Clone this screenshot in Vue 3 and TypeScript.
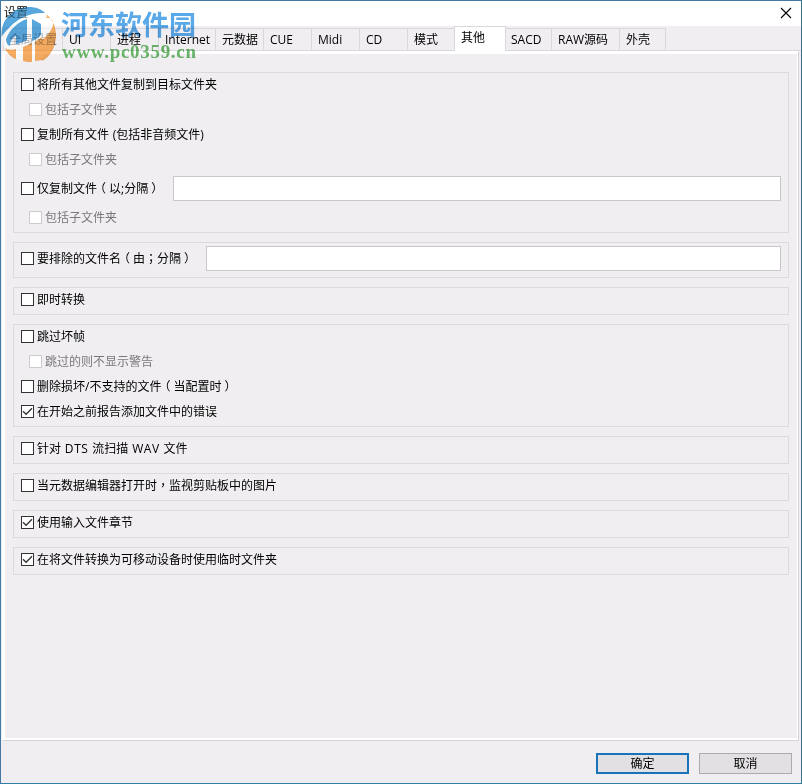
<script setup lang="ts">
interface Option {
  label: string
  sub?: boolean
  checked?: boolean
  field?: number
}

const tabs = [
  { name: '全局设置', width: 60 },
  { name: 'UI', width: 48 },
  { name: '进程', width: 48 },
  { name: 'Internet', width: 57 },
  { name: '元数据', width: 48 },
  { name: 'CUE', width: 48 },
  { name: 'Midi', width: 48 },
  { name: 'CD', width: 48 },
  { name: '模式', width: 47 },
  { name: '其他', width: 52 },
  { name: 'SACD', width: 46 },
  { name: 'RAW源码', width: 68 },
  { name: '外壳', width: 46 },
]

const groups: Option[][] = [
  [
    { label: '将所有其他文件复制到目标文件夹' },
    { label: '包括子文件夹', sub: true },
    { label: '复制所有文件 (包括非音频文件)' },
    { label: '包括子文件夹', sub: true },
    { label: '仅复制文件（以;分隔）', field: 608 },
    { label: '包括子文件夹', sub: true },
  ],
  [{ label: '要排除的文件名（由；分隔）', field: 575 }],
  [{ label: '即时转换' }],
  [
    { label: '跳过坏帧' },
    { label: '跳过的则不显示警告', sub: true },
    { label: '删除损坏/不支持的文件（当配置时）' },
    { label: '在开始之前报告添加文件中的错误', checked: true },
  ],
  [{ label: '针对 DTS 流扫描 WAV 文件' }],
  [{ label: '当元数据编辑器打开时，监视剪贴板中的图片' }],
  [{ label: '使用输入文件章节', checked: true }],
  [{ label: '在将文件转换为可移动设备时使用临时文件夹', checked: true }],
]

// Full-width marks are centred in their cell and Latin words are tracked, so both are split out.
const pieces = (label: string): string[] => label.split(/([（）；，]|[A-Z]{3})/).filter(Boolean)
const kind = (s: string): string =>
  /^[（）]$/.test(s) ? 'bracket' : /^[；，]$/.test(s) ? 'mark' : /^[A-Z]{3}$/.test(s) ? 'latin' : ''
</script>

<template>
  <div class="window">
    <header class="titlebar">
      <span>设置</span>
      <svg class="close" width="12" height="12" viewBox="0 0 12 12">
        <path d="M1 1L11 11M11 1L1 11" />
      </svg>
    </header>

    <nav class="tabs">
      <div
        v-for="tab in tabs"
        :key="tab.name"
        class="tab"
        :class="{ active: tab.name === '其他', tight: tab.name === 'SACD' }"
        :style="{ width: tab.width + 'px' }"
      >{{ tab.name }}</div>
    </nav>

    <main class="pane">
      <section v-for="(group, g) in groups" :key="g" class="group">
        <div v-for="(o, i) in group" :key="i" class="row" :class="{ sub: o.sub, tall: o.field }">
          <span class="box">
            <svg v-if="o.checked" width="11" height="11" viewBox="0 0 11 11">
              <path d="M1 5.2L4.1 8.3L10 2.2" />
            </svg>
          </span>
          <span class="label"><span
            v-for="(p, k) in pieces(o.label)"
            :key="k"
            :class="kind(p)"
          >{{ p }}</span></span>
          <input v-if="o.field" class="field" type="text" :style="{ width: o.field + 'px' }" />
        </div>
      </section>
    </main>

    <footer class="footer">
      <button class="btn primary">确定</button>
      <button class="btn">取消</button>
    </footer>

    <svg class="watermark veil" width="60" height="68" viewBox="0 0 60 68">
      <circle cx="28.7" cy="34.5" r="27.3" />
    </svg>
    <svg class="watermark" width="200" height="68" viewBox="0 0 200 68">
      <path class="blue" d="M1.5 34C2 17 15 7 29 7C36 7 41 9 45 13C31 12 18 18 10 27C6 31 3 34 1.5 37Z" />
      <path class="blue" d="M6 39C10 29 18 22 27 19L27 40C23 42 19 44 16 44L16 36C12 38 10 42 10 46C7 45 6 42 6 39Z" />
      <path class="blue" d="M32 19L41 24L41 35C38 38 35 40 32 41Z" />
      <path class="orange" d="M45 18C51 17 54 20 53 25C52 30 48 35 42 40L42 61C50 57 56 47 56 35C56 26 52 18 46 14C48 16 47 17 45 18Z" />
      <path class="orange" d="M5 48C8 50 12 50 16 49L16 59C11 57 7 53 5 48Z" />
      <path class="orange" d="M23 47L32 43L32 62C29 62 26 62 23 61Z" />
      <path class="orange" d="M35 42L42 37L42 60L35 61Z" />
      <text class="name" x="61" y="35" textLength="135">河东软件园</text>
      <text class="site" x="62" y="58" textLength="134">www.pc0359.cn</text>
    </svg>
  </div>
</template>

<style>
body {
  margin: 0;
}
</style>

<style scoped>
.window {
  position: relative;
  box-sizing: border-box;
  width: 802px;
  height: 784px;
  display: flex;
  flex-direction: column;
  border: 1px solid #4278a4;
  border-bottom-color: #2f7fa6;
  border-right-color: #35748f;
  background: #f0eef1;
  color: #000;
  font: 12px/16px "Open Sans", "Noto Sans CJK SC", sans-serif;
}
.titlebar {
  display: flex;
  justify-content: space-between;
  height: 21px;
  padding: 4px 9px 0 3px;
  background: #fff;
}
.close {
  margin-top: 2px;
  fill: none;
  stroke: #000;
  stroke-width: 1.1;
}
.tabs {
  display: flex;
  align-items: flex-end;
  height: 25px;
  padding-left: 2px;
  box-shadow: inset 0 -1px #d9d7dc;
}
.tab {
  box-sizing: border-box;
  height: 23px;
  padding: 3px 0 0 6px;
  border: 1px solid #d9d7dc;
  border-left: 0;
  white-space: nowrap;
}
.tab.tight {
  padding-left: 5px;
}
.tab:first-child {
  padding-left: 5px;
  border-left: 1px solid #d9d7dc;
  color: #555;
}
.tab.active {
  height: 25px;
  margin-left: -1px;
  border-left: 1px solid #d9d7dc;
  border-bottom: 0;
  background: #fff;
}
.pane {
  box-sizing: border-box;
  height: 689px;
  margin: 0 3px 0 1px;
  padding: 18px 7px 0 8px;
  border: solid #fff;
  border-width: 3px 1px 2px 3px;
  box-shadow: 1px 1px #d6d4d9;
  display: flex;
  flex-direction: column;
  gap: 9px;
}
.group {
  box-sizing: border-box;
  width: 776px;
  padding: 0 7px 2px;
  border: 1px solid #dcdadd;
}
.row {
  display: flex;
  align-items: center;
  height: 25px;
}
.row:first-child {
  margin-top: -1px;
}
.row.tall {
  height: 33px;
}
.row.tall:only-child {
  height: 33px;
}
.row.sub {
  padding-left: 8px;
  color: #7a787b;
}
.box {
  box-sizing: border-box;
  flex: none;
  width: 13px;
  height: 13px;
  border: 1px solid #333;
  background: #fff;
}
.sub .box {
  border-color: #ccc;
}
.box svg {
  display: block;
  fill: none;
  stroke: #333;
  stroke-width: 1.3;
}
.label {
  margin-left: 3px;
  white-space: pre;
  word-spacing: 0.7px;
}
.bracket {
  display: inline-block;
  width: 12px;
  text-align: center;
  font-feature-settings: "halt";
}
.mark {
  font-family: "Noto Sans CJK TC", sans-serif;
  line-height: 1;
}
.latin {
  letter-spacing: 0.6px;
}
.field {
  box-sizing: border-box;
  height: 25px;
  margin-left: auto;
  border: 1px solid #c9c7ca;
  background: #fff;
  outline: 0;
}
.footer {
  display: flex;
  justify-content: flex-end;
  gap: 10px;
  padding: 13px 9px 0 0;
}
.btn {
  box-sizing: border-box;
  width: 93px;
  height: 21px;
  padding: 0;
  border: 1px solid #adabae;
  background: #e2e0e3;
  color: #000;
  font: inherit;
  line-height: 18px;
}
.btn.primary {
  border: 2px solid #1873b8;
  line-height: 16px;
}
.watermark {
  position: absolute;
  left: -1px;
  top: -1px;
  pointer-events: none;
  mix-blend-mode: multiply;
}
.watermark.veil {
  mix-blend-mode: normal;
  fill: #fff;
  fill-opacity: 0.5;
}
.blue {
  fill: #58a7dc;
}
.orange {
  fill: #f8ae62;
}
.name {
  fill: #5aaaea;
  font: 700 27px "Noto Sans CJK SC", sans-serif;
}
.site {
  fill: #6cbb6c;
  font: 700 19px "Liberation Serif", serif;
}
</style>
